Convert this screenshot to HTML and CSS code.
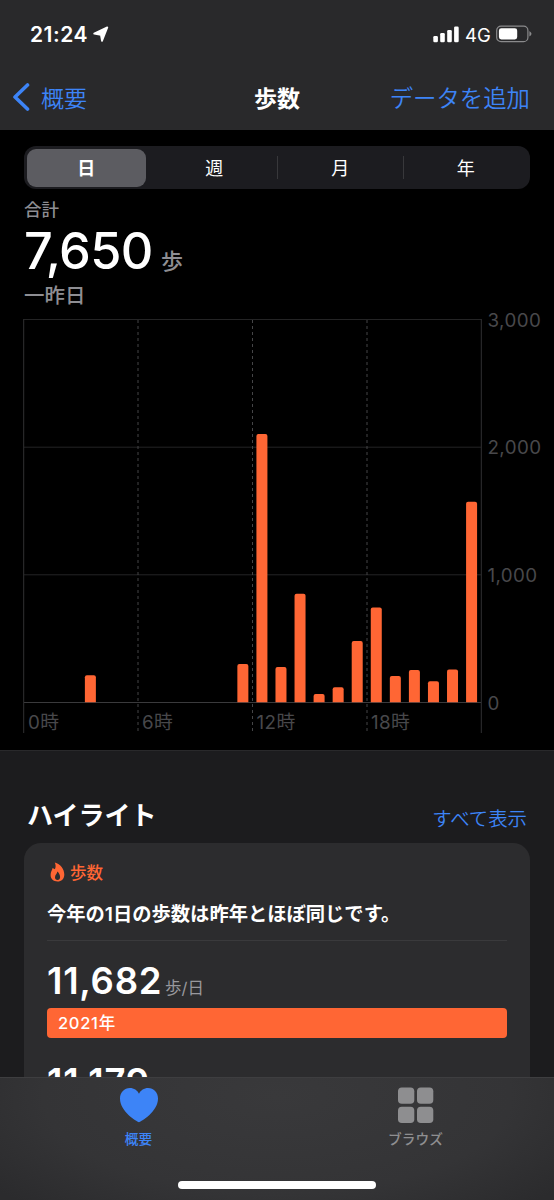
FILE: index.html
```
<!DOCTYPE html>
<html lang="ja">
<head>
    <meta charset="UTF-8">
    <meta name="viewport" content="width=device-width, initial-scale=1.0">
    <title>歩数</title>
    <link rel="stylesheet" href="styles.css">
</head>
<body>

    <header class="header">
        <div class="status">
            <span class="time">21:24</span>
            <svg class="location" width="16" height="17" viewBox="0 0 16 17"><path d="M14.3 1.4 L9 14.8 L7.9 8.8 L1.2 7.6 Z" fill="#fff" stroke="#fff" stroke-width="1.8" stroke-linejoin="round"/></svg>
            <svg class="signal" width="27" height="17" viewBox="0 0 27 17" fill="#fff">
                <rect x="0.3" y="10" width="4.6" height="6.2" rx="1.3"/>
                <rect x="7.2" y="7" width="4.6" height="9.2" rx="1.3"/>
                <rect x="14.2" y="4" width="4.6" height="12.2" rx="1.3"/>
                <rect x="21.1" y="0.4" width="4.6" height="15.8" rx="1.3"/>
            </svg>
            <span class="network">4G</span>
            <svg class="battery" width="37" height="18" viewBox="0 0 37 18">
                <rect x="0.7" y="1.1" width="31.2" height="15.6" rx="4.3" fill="none" stroke="#8a8a8c" stroke-width="1.2"/>
                <rect x="2.9" y="3.3" width="18.3" height="11.2" rx="2.4" fill="#fff"/>
                <path d="M33.4 6 Q37.6 8.8 33.4 11.6 Z" fill="#8a8a8c"/>
            </svg>
        </div>
        <nav class="nav">
            <a class="back">
                <svg width="18" height="28" viewBox="0 0 18 28"><path d="M15.5 2 L3 14 L15.5 26" fill="none" stroke="#3d84f7" stroke-width="3.6" stroke-linecap="round" stroke-linejoin="round"/></svg>
                <span>概要</span>
            </a>
            <h1 class="title">歩数</h1>
            <a class="add">データを追加</a>
        </nav>
    </header>

    <main class="content">
        <section class="steps">
            <div class="segments">
                <span class="segment active">日</span>
                <span class="segment">週</span>
                <span class="segment divided">月</span>
                <span class="segment divided">年</span>
            </div>

            <div class="total-label">合計</div>
            <div class="total"><span class="total-value">7,650</span><span class="total-unit">歩</span></div>
            <div class="total-date">一昨日</div>

            <svg class="chart" width="554" height="440" viewBox="0 310 554 440">
                <!-- grid -->
                <g stroke="#242425" stroke-width="1">
                    <path d="M24 319.5 H481 M24 447.2 H481 M24 574.8 H481"/>
                    <path d="M24 702.5 H481" stroke="#3a3a3c"/>
                    <path d="M23.7 319 V733 M481.3 319 V733" stroke="#303032"/>
                    <path d="M138 320 V732 M252.5 320 V732 M367 320 V732" stroke="#454547" stroke-dasharray="3 3"/>
                </g>
                <!-- hourly steps -->
                <g class="bars" id="bars"></g>
                <g class="axis">
                    <text x="487.5" y="326.5">3,000</text>
                    <text x="487.5" y="454">2,000</text>
                    <text x="487.5" y="581.8">1,000</text>
                    <text x="487.5" y="709.5">0</text>
                    <text x="28" y="728.5">0時</text>
                    <text x="142" y="728.5">6時</text>
                    <text x="256.5" y="728.5">12時</text>
                    <text x="371" y="728.5">18時</text>
                </g>
            </svg>
        </section>

        <section class="highlights">
            <div class="highlights-head">
                <h2>ハイライト</h2>
                <a>すべて表示</a>
            </div>
            <article class="card">
                <div class="card-type">
                    <svg width="15" height="20" viewBox="0 0 15 20"><path fill-rule="evenodd" d="M4.8 .5 C10.5 2 14.3 7 14.3 12.4 C14.3 16.8 11.4 19.4 7.5 19.4 C3.5 19.4 .6 16.9 .6 13 C.6 10 2 8.2 2.6 5.9 L4.9 7.2 C6 5 5.8 2.8 4.8 .5 Z M7.3 9.6 C7.3 12 5 12.8 5 15.2 C5 17 6 18 7.5 18 C9.1 18 10.1 17 10.1 15.1 C10.1 12.9 8.9 10.8 7.3 9.6 Z" fill="#ff6634"/></svg>
                    <span>歩数</span>
                </div>
                <p class="message">今年の1日の歩数は昨年とほぼ同じです。</p>
                <div class="average"><span class="average-value">11,682</span><span class="average-unit">歩/日</span></div>
                <div class="year">2021年</div>
                <div class="average previous"><span class="average-value">11,179</span></div>
            </article>
        </section>
    </main>

    <footer class="tabbar">
        <div class="tabs">
            <a class="tab selected">
                <svg width="40" height="36" viewBox="0 0 40 36"><path d="M20 35.2 C17.5 34.6 1 24.5 1 11.6 C1 5.3 5.4 1 10.9 1 C15 1 18.3 3.2 20 6.8 C21.7 3.2 25 1 29.1 1 C34.6 1 39 5.3 39 11.6 C39 24.5 22.5 34.6 20 35.2 Z" fill="#3d84f7"/></svg>
                <span>概要</span>
            </a>
            <a class="tab">
                <svg width="36" height="36" viewBox="0 0 36 36" fill="#8e8e90">
                    <rect x="0" y="0.5" width="16.3" height="16.3" rx="3.8"/>
                    <rect x="19" y="0.5" width="16.3" height="16.3" rx="3.8"/>
                    <rect x="0" y="19.7" width="16.3" height="16.3" rx="3.8"/>
                    <rect x="19" y="19.7" width="16.3" height="16.3" rx="3.8"/>
                </svg>
                <span>ブラウズ</span>
            </a>
        </div>
        <div class="home"></div>
    </footer>

    <script src="script.js"></script>
</body>
</html>
```

FILE: styles.css
```
* {
    box-sizing: border-box;
}

body {
    margin: 0;
    width: 554px;
    height: 1200px;
    display: flex;
    flex-direction: column;
    overflow: hidden;
    background-color: #1c1c1e;
    color: #fff;
    font-family: Inter, "Noto Sans CJK JP", sans-serif;
    white-space: nowrap;
}

h1, h2, p {
    margin: 0;
}

svg {
    display: block;
    flex-shrink: 0;
}

/* header */
.header {
    height: 130px;
    flex-shrink: 0;
    background-color: #29292b;
}

.status {
    display: flex;
    align-items: center;
    height: 68px;
    padding: 0 21px 0 30px;
}

.time {
    font-size: 21px;
    font-weight: 600;
    letter-spacing: 0.5px;
    width: 63px;
}

.signal {
    margin-left: auto;
}

.network {
    font-size: 18.5px;
    font-weight: 400;
    margin: 1px 7px 0 5px;
    width: 24px;
}

.nav {
    display: grid;
    grid-template-columns: 1fr auto 1fr;
    align-items: center;
    height: 58px;
    padding: 0 24px 0 12px;
    font-size: 23px;
    font-weight: 350;
    color: #3d84f7;
}

.back {
    display: flex;
    align-items: center;
    gap: 11px;
}

.title {
    font-size: 23px;
    font-weight: 700;
    color: #fff;
    margin-left: 12px;
}

.add {
    text-align: right;
    font-size: 23.4px;
}

/* steps */
.content {
    flex: 1;
    min-height: 0;
    overflow: hidden;
}

.steps {
    height: 620px;
    padding: 16px 24px 0;
    background-color: #000;
}

.segments {
    display: grid;
    grid-template-columns: repeat(4, 1fr);
    align-items: center;
    height: 43px;
    padding: 2px;
    border-radius: 12px;
    background-color: #1c1c20;
    font-size: 18px;
    text-align: center;
}

.segment {
    height: 23px;
    line-height: 25px;
}

.divided {
    border-left: 1px solid #38383b;
}

.active {
    height: 38px;
    line-height: 39px;
    margin: 0 6px 0 1px;
    border-radius: 9px;
    background-color: #5c5c61;
    font-weight: 700;
}

.total-label {
    height: 38px;
    line-height: 41px;
    font-size: 17.5px;
    font-weight: 500;
    color: #8e8e93;
}

.total {
    display: flex;
    align-items: baseline;
    height: 56px;
    line-height: 56px;
    margin-top: -4px;
}

.total-value {
    font-size: 50.5px;
    font-weight: 500;
    letter-spacing: -0.7px;
    width: 137px;
}

.total-unit {
    font-size: 22px;
    font-weight: 500;
    line-height: 54px;
    color: #8e8e93;
}

.total-date {
    height: 31px;
    line-height: 33px;
    font-size: 20.5px;
    font-weight: 500;
    color: #8e8e93;
}

.chart {
    margin-left: -24px;
}

.bars {
    fill: #ff6634;
}

.axis {
    fill: #48484b;
    font-size: 18.8px;
    letter-spacing: 0.4px;
}

/* highlights */
.highlights {
    border-top: 1px solid #29292b;
    padding: 0 24px;
}

.highlights-head {
    display: flex;
    justify-content: space-between;
    align-items: center;
    height: 92px;
    padding: 33px 3px 0 3px;
}

.highlights-head h2 {
    font-size: 26px;
    font-weight: 700;
}

.highlights-head a {
    font-size: 19.4px;
    font-weight: 350;
    color: #3d84f7;
    padding-top: 7px;
}

.card {
    height: 400px;
    padding: 18px 23px 0 23px;
    border-radius: 17px;
    background-color: #2c2c2e;
}

.card-type {
    display: flex;
    align-items: center;
    gap: 5px;
    height: 22px;
    padding-left: 3px;
    font-size: 16.5px;
    font-weight: 500;
    color: #ff6634;
}

.message {
    height: 58px;
    line-height: 62px;
    border-bottom: 1px solid #3a3a3c;
    font-size: 19.3px;
    font-weight: 600;
}

.average {
    display: flex;
    align-items: baseline;
    height: 67px;
    line-height: 80px;
}

.average-value {
    font-size: 36.5px;
    font-weight: 600;
    letter-spacing: 0.7px;
    width: 118px;
}

.previous {
    line-height: 88px;
}

.average-unit {
    font-size: 16.5px;
    color: #98989d;
}

.year {
    height: 30px;
    line-height: 30px;
    padding-left: 11px;
    border-radius: 4px;
    background-color: #ff6634;
    font-size: 16.5px;
    font-weight: 500;
    letter-spacing: 0.7px;
}

/* tab bar */
.tabbar {
    height: 123px;
    flex-shrink: 0;
    border-top: 1px solid #3e3e40;
    background: radial-gradient(ellipse 360px 150px at 50% 15%, #39393b, #343436 65%, #2b2b2d);
}

.tabs {
    display: grid;
    grid-template-columns: 1fr 1fr;
    height: 103px;
    padding-top: 9px;
}

.tab {
    display: flex;
    flex-direction: column;
    align-items: center;
    gap: 6px;
    font-size: 13.7px;
    font-weight: 500;
    line-height: 20px;
    color: #8e8e90;
}

.selected {
    color: #3d84f7;
}

.home {
    width: 198px;
    height: 8px;
    margin: 0 auto;
    border-radius: 4px;
    background-color: #fff;
}
```

FILE: script.js
```
// [hour, top of the bar]
const hours = [
    [3, 675.3], [11, 664], [12, 434], [13, 667], [14, 593.7], [15, 694],
    [16, 687.2], [17, 641], [18, 607.5], [19, 676], [20, 670],
    [21, 681.3], [22, 669.4], [23, 501.7]
];
const baseline = 702.3;

document.getElementById('bars').innerHTML = hours.map(([hour, top]) => {
    const x = 27.7 + hour * 19.06;
    return `<path d="M${x} ${baseline} V${top + 2} q0 -2 2 -2 h7 q2 0 2 2 V${baseline} Z"/>`;
}).join('');
```
